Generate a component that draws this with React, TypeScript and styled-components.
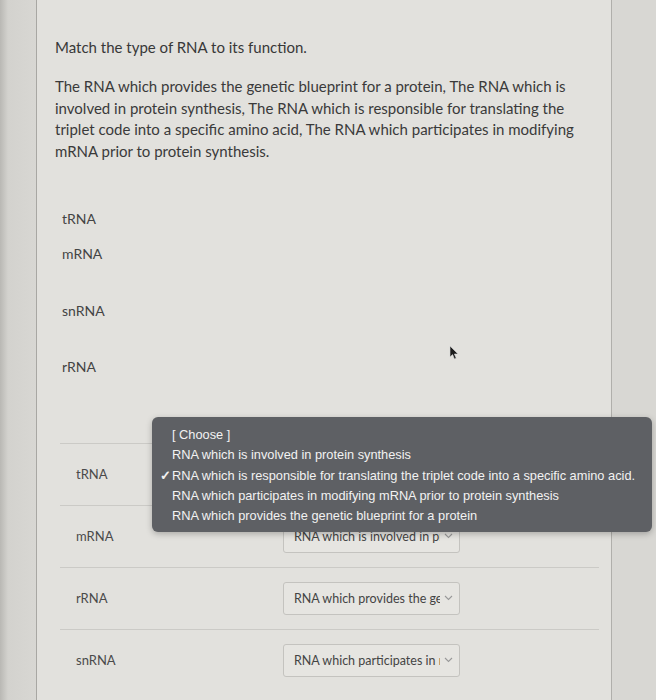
import * as React from 'react'
import styled, { createGlobalStyle } from 'styled-components'

const GlobalStyle = createGlobalStyle`
  html, body {
    margin: 0;
    padding: 0;
    background: #d6d5d1;
  }
  body {
    font-family: Lato, "Open Sans", sans-serif;
    color: #3a3a3a;
  }
`

const Screen = styled.div`
  display: flex;
  min-height: 700px;
  padding: 0 44px 0 36px;
  background: linear-gradient(90deg, #b9b8b4 0, #d3d2ce 8px, #d8d7d3 36px);
  overflow: hidden;
`

const Card = styled.div`
  position: relative;
  flex: 1;
  background: #e2e1dd;
  border-left: 1px solid #a8a7a3;
  border-right: 1px solid #b0afab;
  padding: 37px 12px 0 18px;
`

const Title = styled.p`
  margin: 0;
  font-size: 15px;
  line-height: 20px;
  color: #383838;
`

const Prompt = styled.p`
  margin: 19px 0 0;
  width: 532px;
  font-size: 15px;
  line-height: 21.7px;
  color: #3a3a3a;
`

const AnswerList = styled.div`
  display: flex;
  flex-direction: column;
  margin-top: 46px;
  padding-left: 7px;
`

const Answer = styled.div<{ $gap: number }>`
  margin-top: ${p => p.$gap}px;
  font-size: 14px;
  line-height: 20px;
  color: #444;
`

const MatchTable = styled.div`
  position: relative;
  margin: 66px 0 0 5px;
`

const Row = styled.div`
  display: flex;
  align-items: center;
  height: 61px;
  padding-left: 16px;
  border-top: 1px solid #cbcac6;
`

const RowLabel = styled.div`
  width: 207px;
  font-size: 13px;
  color: #4a4a4a;
`

const Select = styled.div`
  display: flex;
  align-items: center;
  width: 177px;
  height: 33px;
  box-sizing: border-box;
  padding: 0 6px 0 10px;
  border: 1px solid #c4c3bf;
  border-radius: 3px;
  background: #e6e5e1;
  font-size: 12.5px;
  color: #444;
`

const SelectText = styled.span`
  flex: 1;
  margin-right: 4px;
  overflow: hidden;
  white-space: nowrap;
`

const Menu = styled.ul`
  position: absolute;
  top: -26px;
  left: 92px;
  width: 500px;
  box-sizing: border-box;
  margin: 0;
  padding: 8px 0 5px 8px;
  list-style: none;
  background: #5e6064;
  border-radius: 6px;
  box-shadow: 0 2px 6px rgba(0, 0, 0, 0.25);
  font-family: "Liberation Sans", Arial, sans-serif;
  font-size: 12.8px;
  color: #f2f2f2;
  z-index: 2;
`

const MenuItem = styled.li`
  display: flex;
  line-height: 20.4px;
  white-space: nowrap;
`

const Check = styled.span`
  width: 12px;
  font-size: 13px;
  font-weight: bold;
`

const Cursor = styled.svg`
  position: absolute;
  left: 412px;
  top: 345px;
`

const Chevron = () => (
  <svg width="9" height="6" viewBox="0 0 9 6">
    <path d="M1 1l3.5 3.5L8 1" fill="none" stroke="#999" strokeWidth="1.1" />
  </svg>
)

const options = [
  '[ Choose ]',
  'RNA which is involved in protein synthesis',
  'RNA which is responsible for translating the triplet code into a specific amino acid.',
  'RNA which participates in modifying mRNA prior to protein synthesis',
  'RNA which provides the genetic blueprint for a protein',
]

const rows = [
  { label: 'tRNA', value: 'RNA which is responsible for translating' },
  { label: 'mRNA', value: 'RNA which is involved in protein synthesis' },
  { label: 'rRNA', value: 'RNA which provides the genetic blueprint' },
  { label: 'snRNA', value: 'RNA which participates in modifying' },
]

export default function App() {
  return (
    <>
      <GlobalStyle />
      <Screen>
        <Card>
          <Title>Match the type of RNA to its function.</Title>
          <Prompt>
            The RNA which provides the genetic blueprint for a protein, The RNA which is involved in protein synthesis,
            The RNA which is responsible for translating the triplet code into a specific amino acid, The RNA which
            participates in modifying mRNA prior to protein synthesis.
          </Prompt>
          <AnswerList>
            <Answer $gap={0}>tRNA</Answer>
            <Answer $gap={15}>mRNA</Answer>
            <Answer $gap={37}>snRNA</Answer>
            <Answer $gap={36}>rRNA</Answer>
          </AnswerList>
          <Cursor width="10" height="15" viewBox="0 0 10 15">
            <path d="M1 1v11l2.6-2.4L5.4 14l1.8-.8-1.8-4.2H9z" fill="#1c1c1c" stroke="#d8d8d8" strokeWidth="0.6" />
          </Cursor>
          <MatchTable>
            {rows.map(r => (
              <Row key={r.label}>
                <RowLabel>{r.label}</RowLabel>
                <Select>
                  <SelectText>{r.value}</SelectText>
                  <Chevron />
                </Select>
              </Row>
            ))}
            <Menu>
              {options.map((o, i) => (
                <MenuItem key={o}>
                  <Check>{i === 2 ? '✓' : ''}</Check>
                  {o}
                </MenuItem>
              ))}
            </Menu>
          </MatchTable>
        </Card>
      </Screen>
    </>
  )
}
